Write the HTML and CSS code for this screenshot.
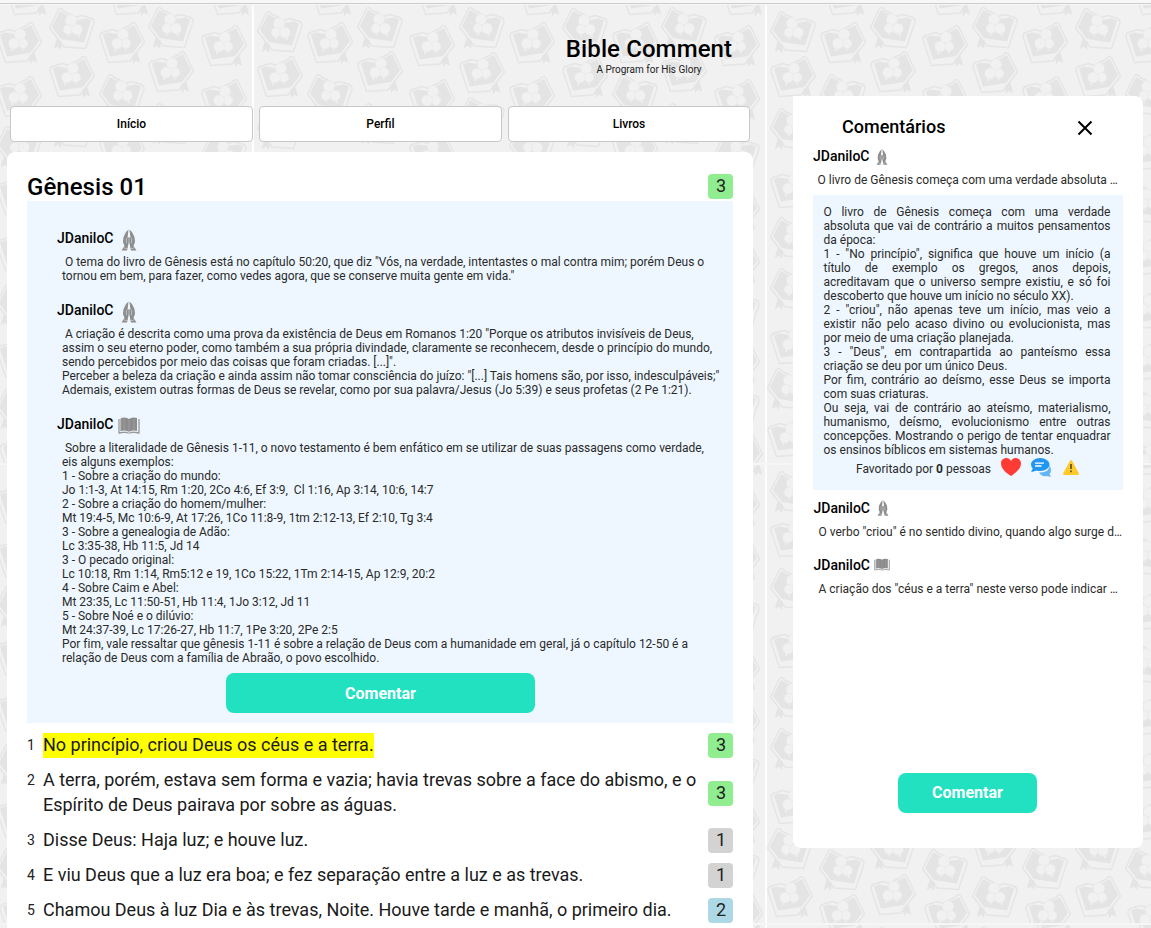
FILE: index.html
```html
<!DOCTYPE html>
<html lang="pt-BR">
<head>
<meta charset="utf-8">
<title>Bible Comment</title>
<link rel="stylesheet" href="styles.css">
</head>
<body>
<svg class="wallpaper" width="1151" height="928" aria-hidden="true">
  <defs>
    <g id="b">
      <path d="M4 12.500 9 10.500 15 11.500 19 12 22 8 29 6.500 35 3 43 19 34 31 11 34.500Z" fill="#e4e4e4"/>
      <path d="M6.500 9.500Q.5 10.500 1 15L9.500 40.500 31 39 45.500 20 36.500 1.500Q34 -1 31 3.500L25 6 20 9.500 13 7.500 6.500 9.500" fill="none" stroke="#e5e5e5" stroke-width="1.400" stroke-linejoin="round"/>
      <path d="M33 34 38 30 40 36 41 41 37 38.500 34 42Z" fill="#e4e4e4"/>
      <g fill="#f1f1f1" stroke="#e4e4e4" stroke-width=".5"><circle cx="24" cy="12.500" r="5.800"/><path d="m25 25 1.500 4.500 2.500-4.500zM15 26v4l4-3z"/><circle cx="27" cy="21.500" r="5"/><circle cx="18" cy="21.500" r="5.500"/></g>
    </g>
    <g id="a"><use href="#b" transform="matrix(-1 0 0 1 46 0)"/></g>
    <pattern id="books" width="513" height="460" patternUnits="userSpaceOnUse" patternTransform="translate(253 4)">
      <rect width="513" height="460" fill="#f1f1f1"/>
      <use href="#a" x="4" y="7"/><use href="#b" x="4" y="52"/><use href="#a" x="4" y="104"/><use href="#b" x="4" y="163"/><use href="#a" x="4" y="213"/><use href="#a" x="4" y="264"/><use href="#b" x="4" y="319"/><use href="#a" x="1" y="364"/><use href="#b" x="1" y="412"/>
      <use href="#b" x="57" y="-30"/><use href="#b" x="54" y="18"/><use href="#a" x="54" y="70"/><use href="#a" x="53" y="385"/><use href="#b" x="53" y="430"/>
      <use href="#a" x="104" y="3"/><use href="#b" x="104" y="47"/><use href="#a" x="104" y="99"/><use href="#a" x="104" y="364"/><use href="#b" x="104" y="410"/>
      <use href="#b" x="163" y="-30"/><use href="#b" x="156" y="21"/><use href="#b" x="156" y="75"/><use href="#b" x="156" y="130"/><use href="#a" x="156" y="385"/><use href="#b" x="158" y="430"/>
      <use href="#a" x="206" y="3"/><use href="#b" x="206" y="48"/><use href="#a" x="206" y="93"/><use href="#b" x="206" y="362"/><use href="#a" x="206" y="412"/>
      <use href="#b" x="265" y="-30"/><use href="#b" x="256" y="18"/><use href="#b" x="256" y="72"/><use href="#a" x="256" y="122"/><use href="#b" x="256" y="170"/><use href="#b" x="256" y="226"/><use href="#a" x="256" y="280"/><use href="#b" x="256" y="332"/><use href="#a" x="256" y="384"/><use href="#b" x="259" y="430"/>
      <use href="#a" x="309" y="4"/><use href="#b" x="309" y="52"/><use href="#a" x="309" y="102"/><use href="#a" x="309" y="365"/><use href="#b" x="309" y="412"/>
      <use href="#b" x="367" y="-30"/><use href="#b" x="359" y="18"/><use href="#a" x="359" y="70"/><use href="#b" x="359" y="125"/><use href="#a" x="359" y="178"/><use href="#b" x="359" y="230"/><use href="#b" x="359" y="284"/><use href="#b" x="359" y="335"/><use href="#a" x="359" y="384"/><use href="#b" x="361" y="434"/>
      <use href="#a" x="408" y="3"/><use href="#b" x="408" y="47"/><use href="#a" x="408" y="99"/><use href="#a" x="408" y="364"/><use href="#b" x="408" y="412"/>
      <use href="#b" x="468" y="-30"/><use href="#b" x="461" y="21"/><use href="#b" x="461" y="75"/><use href="#a" x="461" y="130"/><use href="#b" x="461" y="185"/><use href="#b" x="461" y="238"/><use href="#a" x="461" y="286"/><use href="#b" x="461" y="338"/><use href="#a" x="461" y="382"/><use href="#b" x="464" y="430"/>
      <path d="M0 0V460M513 0V460" stroke="#fdfdfd" stroke-width="2"/>
      <path d="M0 0H513M0 460H513" stroke="#f6f6f6" stroke-width="2"/>
    </pattern>
    <symbol id="hands" viewBox="0 0 16 22">
      <path d="M7.500.5 5 3 2.500 8 2 13l1.500 4L.5 21.500h5.500L7 17l.8-4V8L6.500 9 7 5zM8.500.5 11 3l2.500 5 .5 5-1.500 4 3 4.500H10L9 17l-.8-4V8L9.500 9 9 5z" fill="#8e8e8e"/>
      <path d="M5.500 9v5M10.500 9v5M3 19l3.500.8M13 19l-3.500.8" stroke="#c8ccd0" stroke-width=".8"/>
    </symbol>
    <symbol id="book" viewBox="0 0 22 17">
      <path d="M3 1Q8-.5 11 2q3-2.500 8-1v13q-5-1-8 1-3-2-8-1z" fill="#8c8c8c"/>
      <path d="M1 2v14q6-1.500 10 0 4-1.500 10 0V2M3 2v12" fill="none" stroke="#999" stroke-width="1.300"/>
      <path d="M11 3v11M6 2v11M16 2v11" stroke="#aaa" stroke-width=".6"/>
      <path d="M2.500 14.500q5-1.500 8.500.7 3.500-2.200 8.500-.7" fill="none" stroke="#e6e6e6" stroke-width=".8"/>
    </symbol>
  </defs>
  <rect width="1151" height="928" fill="url(#books)"/>
</svg>
<div class="topline"></div>
<div class="page">
  <main class="main">
    <header class="brand"><h1>Bible Comment</h1><p>A Program for His Glory</p></header>
    <nav class="nav"><a>Início</a><a>Perfil</a><a>Livros</a></nav>
    <article class="chapter">
      <div class="chapter-head"><h2>Gênesis 01</h2><span class="badge green">3</span></div>
      <section class="notes">
        <div class="author">JDaniloC<svg class="i-hands"><use href="#hands"/></svg></div>
        <p>&nbsp;O tema do livro de Gênesis está no capítulo 50:20, que diz "Vós, na verdade, intentastes o mal contra mim; porém Deus o<br>tornou em bem, para fazer, como vedes agora, que se conserve muita gente em vida."</p>
        <div class="author">JDaniloC<svg class="i-hands"><use href="#hands"/></svg></div>
        <p>&nbsp;A criação é descrita como uma prova da existência de Deus em Romanos 1:20 "Porque os atributos invisíveis de Deus,<br>assim o seu eterno poder, como também a sua própria divindade, claramente se reconhecem, desde o princípio do mundo,<br>sendo percebidos por meio das coisas que foram criadas. [...]".<br>Perceber a beleza da criação e ainda assim não tomar consciência do juízo: "[...] Tais homens são, por isso, indesculpáveis;"<br>Ademais, existem outras formas de Deus se revelar, como por sua palavra/Jesus (Jo 5:39) e seus profetas (2 Pe 1:21).</p>
        <div class="author">JDaniloC<svg class="i-book"><use href="#book"/></svg></div>
        <p>&nbsp;Sobre a literalidade de Gênesis 1-11, o novo testamento é bem enfático em se utilizar de suas passagens como verdade,<br>eis alguns exemplos:<br>1 - Sobre a criação do mundo:<br>Jo 1:1-3, At 14:15, Rm 1:20, 2Co 4:6, Ef 3:9, &nbsp;Cl 1:16, Ap 3:14, 10:6, 14:7<br>2 - Sobre a criação do homem/mulher:<br>Mt 19:4-5, Mc 10:6-9, At 17:26, 1Co 11:8-9, 1tm 2:12-13, Ef 2:10, Tg 3:4<br>3 - Sobre a genealogia de Adão:<br>Lc 3:35-38, Hb 11:5, Jd 14<br>3 - O pecado original:<br>Lc 10:18, Rm 1:14, Rm5:12 e 19, 1Co 15:22, 1Tm 2:14-15, Ap 12:9, 20:2<br>4 - Sobre Caim e Abel:<br>Mt 23:35, Lc 11:50-51, Hb 11:4, 1Jo 3:12, Jd 11<br>5 - Sobre Noé e o dilúvio:<br>Mt 24:37-39, Lc 17:26-27, Hb 11:7, 1Pe 3:20, 2Pe 2:5<br>Por fim, vale ressaltar que gênesis 1-11 é sobre a relação de Deus com a humanidade em geral, já o capítulo 12-50 é a<br>relação de Deus com a família de Abraão, o povo escolhido.</p>
        <button class="btn wide">Comentar</button>
      </section>
      <ol class="verses">
        <li><sup>1</sup><span class="verse"><mark>No princípio, criou Deus os céus e a terra.</mark></span><span class="badge green">3</span></li>
        <li><sup>2</sup><span class="verse">A terra, porém, estava sem forma e vazia; havia trevas sobre a face do abismo, e o<br>Espírito de Deus pairava por sobre as águas.</span><span class="badge green">3</span></li>
        <li><sup>3</sup><span class="verse">Disse Deus: Haja luz; e houve luz.</span><span class="badge gray">1</span></li>
        <li><sup>4</sup><span class="verse">E viu Deus que a luz era boa; e fez separação entre a luz e as trevas.</span><span class="badge gray">1</span></li>
        <li><sup>5</sup><span class="verse">Chamou Deus à luz Dia e às trevas, Noite. Houve tarde e manhã, o primeiro dia.</span><span class="badge blue">2</span></li>
      </ol>
    </article>
  </main>
  <aside class="side">
    <div class="side-head"><h3>Comentários</h3><svg width="16" height="16" viewBox="0 0 16 16"><path d="M1.500 1.500l13 13M14.500 1.500l-13 13" stroke="#000" stroke-width="2"/></svg></div>
    <div class="side-author">JDaniloC<svg class="i-hands"><use href="#hands"/></svg></div>
    <p class="preview">O livro de Gênesis começa com uma verdade absoluta …</p>
    <section class="detail">
      <p>O livro de Gênesis começa com uma verdade absoluta que vai de contrário a muitos pensamentos da época:</p>
      <p>1 - "No princípio", significa que houve um início (a título de exemplo os gregos, anos depois, acreditavam que o universo sempre existiu, e só foi descoberto que houve um início no século XX).</p>
      <p>2 - "criou", não apenas teve um início, mas veio a existir não pelo acaso divino ou evolucionista, mas por meio de uma criação planejada.</p>
      <p>3 - "Deus", em contrapartida ao panteísmo essa criação se deu por um único Deus.</p>
      <p>Por fim, contrário ao deísmo, esse Deus se importa com suas criaturas.</p>
      <p>Ou seja, vai de contrário ao ateísmo, materialismo, humanismo, deísmo, evolucionismo entre outras concepções. Mostrando o perigo de tentar enquadrar os ensinos bíblicos em sistemas humanos.</p>
      <div class="actions">
        <span>Favoritado por <b>0</b> pessoas</span>
        <svg width="20" height="18" viewBox="0 0 20 18"><path d="M10 18C5 15 0 10.500 0 5.500 0-.5 7.500-2 10 3c2.500-5 10-3.500 10 2.500C20 10.500 15 15 10 18z" fill="#ff3b35"/></svg>
        <svg width="20" height="19" viewBox="0 0 20 19"><path d="M8 14.500q5 .5 8.500-2 2-2 1.800-5Q20 9.500 20 12.500q0 2-1.500 3.500l1.500 2.800q-3 0-4-.8-5.500 1-8-3.500z" fill="#64b5f6"/><path d="M9 0c5.500 0 9.500 3 9.500 6.500S14.500 13 9 13q-2 0-3.500-.5Q3 14 0 13.500l1.800-3Q0 8.500 0 6.500C0 3 4 0 9 0z" fill="#2196f3"/><path d="M4 5.200h9M4 8h6.500" stroke="#fff" stroke-width="1.300"/></svg>
        <svg class="warn" width="16" height="15" viewBox="0 0 16 15"><path d="M7 .8q1-1.600 2 0l6.800 12.500q.4 1.700-1 1.700H1.200q-1.400 0-1-1.700z" fill="#ffca28"/><path d="M8 4v5M8 10.500v1.800" stroke="#59522f" stroke-width="1.700"/></svg>
      </div>
    </section>
    <div class="side-author later">JDaniloC<svg class="i-hands"><use href="#hands"/></svg></div>
    <p class="preview later">O verbo "criou" é no sentido divino, quando algo surge d…</p>
    <div class="side-author later">JDaniloC<svg class="i-book"><use href="#book"/></svg></div>
    <p class="preview later">A criação dos "céus e a terra" neste verso pode indicar …</p>
    <button class="btn">Comentar</button>
  </aside>
</div>
</body>
</html>
```
FILE: styles.css
```css
* { box-sizing: border-box; margin: 0; padding: 0; }
body { height: 928px; overflow: hidden; font-family: Roboto, sans-serif; color: #000; background: #f1f1f1; }
.wallpaper { position: absolute; left: 0; top: 0; z-index: -1; }
.topline { height: 4px; background: #f7f7f7; border-bottom: 1px solid #ccc; }
.page { display: flex; align-items: flex-start; gap: 40px; height: 924px; padding-left: 7px; }
.main { width: 746px; }
.brand { width: 208px; margin-left: 538px; height: 102px; padding-top: 31px; text-align: center; }
.brand h1 { font-size: 24px; font-weight: 500; line-height: 28px; letter-spacing: .1px; }
.brand p { font-size: 10px; line-height: 12px; margin-top: 1px; color: #222; }
.nav { display: grid; grid-template-columns: 243px 243px 242px; gap: 6px; padding: 0 3px; }
.nav a { height: 36px; background: #fff; border: 1px solid #c8c8c8; border-radius: 4px; font-size: 12px; font-weight: 500; line-height: 34px; text-align: center; }
.chapter { margin-top: 10px; height: 790px; padding: 20px; background: #fff; border-radius: 8px 8px 0 0; }
.chapter-head { display: flex; justify-content: space-between; height: 29px; padding-top: 2px; }
.chapter-head h2 { font-size: 24px; font-weight: 500; line-height: 26px; letter-spacing: .05px; }
.badge { flex: none; width: 25px; height: 25px; padding-left: 1px; border-radius: 4px; font-size: 18px; line-height: 23px; text-align: center; color: #222; }
.green { background: #90ee90; }
.gray { background: #d3d3d3; }
.blue { background: #add8e6; }
.notes { height: 522px; padding: 10px 0 0 35px; background: #eef7ff; }
.author { display: flex; align-items: center; height: 44px; margin-left: -5px; padding-top: 10px; font-size: 14px; font-weight: 500; }
.author .i-hands { width: 16px; height: 22px; margin: 4px 0 0 8px; }
.author .i-book { width: 22px; height: 17px; margin: 2px 0 0 5px; }
.notes p { font-size: 12px; line-height: 14px; letter-spacing: -.006px; white-space: nowrap; color: #2a2a2a; }
.btn { display: block; height: 40px; border: 0; border-radius: 8px; background: #22e1c1; color: #fff; font: 700 16px/38px Roboto, sans-serif; text-align: center; }
.notes .wide { width: 309px; margin: 8px 0 0 164px; padding-top: 2px; }
.verses { display: flex; flex-direction: column; gap: 10px; padding-top: 10px; list-style: none; }
.verses li { display: flex; align-items: center; }
.verses sup { align-self: flex-start; width: 16px; font-size: 14px; line-height: 24px; color: #222; }
.verse { flex: 1; height: 100%; margin: -1px 0 1px; font-size: 18px; line-height: 25px; letter-spacing: -.01px; white-space: nowrap; color: #1a1a1a; }
.verse mark { display: inline-block; height: 25px; margin-bottom: -1px; background: linear-gradient(#ff0, #ff0) 0 1px no-repeat; padding-bottom: 1px; box-sizing: content-box; color: inherit; }
.side { display: flex; flex-direction: column; width: 350px; height: 752px; margin-top: 92px; padding: 20px; background: #fff; border-radius: 0 8px 8px 8px; }
.side-head { display: flex; justify-content: space-between; align-items: center; height: 24px; padding: 0 30px 0 29px; }
.side-head h3 { font-size: 18px; font-weight: 500; line-height: 22px; margin-top: -2px; }
.side-author { display: flex; align-items: center; height: 32px; font-size: 14px; font-weight: 500; }
.side-author .i-hands { width: 12px; height: 16px; margin: 1px 0 0 7px; }
.side-author .i-book { width: 16px; height: 13px; margin: 0 0 0 4px; }
.preview { padding-left: 4.500px; height: 23px; font-size: 12px; line-height: 16px; white-space: nowrap; color: #2a2a2a; }
.detail { height: 295px; padding: 10px 12.500px 0 10.500px; background: #eef7ff; font-size: 12px; line-height: 14px; text-align: justify; color: #2a2a2a; }
.actions { display: flex; align-items: center; height: 20px; padding-left: 32.500px; gap: 10px; white-space: nowrap; }
.actions span { padding-top: 4px; }
.warn { margin-left: 2px; }
.side-author.later { padding-left: .5px; height: 33px; margin-top: 1px; }
.preview.later { padding-left: 5.500px; height: 23px; }
.side .btn { width: 139px; margin: auto 0 15px 85px; }
```
